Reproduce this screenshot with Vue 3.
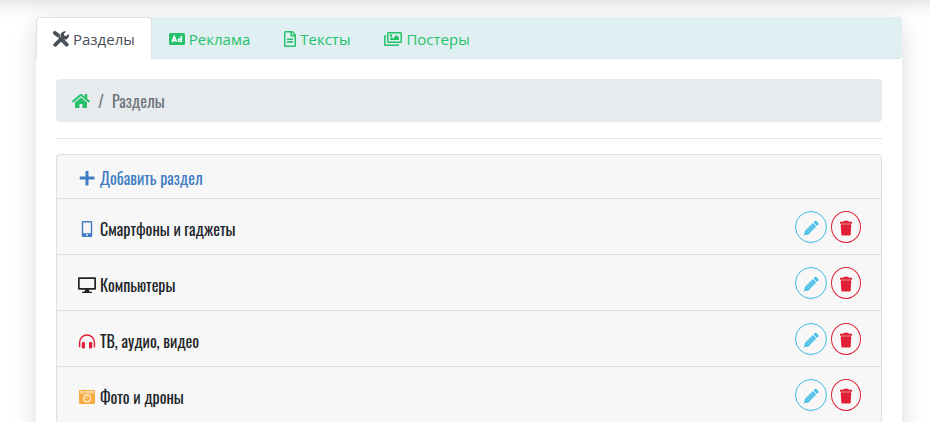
<script setup>
const tabs = [
  { id: 'tools', label: 'Разделы', active: true },
  { id: 'ad', label: 'Реклама' },
  { id: 'file', label: 'Тексты' },
  { id: 'images', label: 'Постеры' },
]

const sections = [
  { id: 'phone', label: 'Смартфоны и гаджеты' },
  { id: 'monitor', label: 'Компьютеры' },
  { id: 'headphones', label: 'ТВ, аудио, видео' },
  { id: 'camera', label: 'Фото и дроны' },
]
</script>

<template>
  <div class="page">
    <main class="panel">
      <nav class="tabs">
        <a v-for="tab in tabs" :key="tab.id" href="#" class="tab" :class="{ active: tab.active }">
          <svg v-if="tab.id === 'tools'" class="icon w16" viewBox="0 0 16 16" aria-hidden="true">
            <path d="M1.900 1.900 5 4.300M2.200 13.800 9 7.200M9.400 9.400l4.300 4.300" fill="none" stroke="currentColor" stroke-width="3.800" stroke-linecap="round" />
            <path d="M4.500 4.500l5.500 5.500" fill="none" stroke="currentColor" stroke-width="1.600" />
            <path d="M13.300.4 10.900 2.800l.4 1.900 1.900.4L15.600 2.700q1.100 3.100-1.200 5-1.900 1.500-4.200.6L7.700 5.800Q6.900 3.600 8.400 1.700q2-2.200 4.900-1.300z" />
          </svg>
          <svg v-else-if="tab.id === 'ad'" class="icon w16" viewBox="0 0 16 16" aria-hidden="true">
            <rect x="0" y="2" width="16" height="12" rx="1.5" />
            <path d="M3 10.900 5.200 5.400 7.400 10.900M3.900 9.400h2.700M12.400 4.900v6" fill="none" stroke="#fff" stroke-width="1.500" />
            <circle cx="10.800" cy="9.100" r="1.500" fill="none" stroke="#fff" stroke-width="1.400" />
          </svg>
          <svg v-else-if="tab.id === 'file'" class="icon w12" viewBox="0 0 384 512" aria-hidden="true">
            <path d="M288 248v28c0 6.600-5.400 12-12 12H108c-6.600 0-12-5.400-12-12v-28c0-6.600 5.400-12 12-12h168c6.600 0 12 5.400 12 12zm-12 72H108c-6.600 0-12 5.400-12 12v28c0 6.600 5.400 12 12 12h168c6.600 0 12-5.400 12-12v-28c0-6.600-5.400-12-12-12zm108-188.100V464c0 26.500-21.500 48-48 48H48c-26.500 0-48-21.500-48-48V48C0 21.500 21.500 0 48 0h204.100C264.800 0 277 5.100 286 14.100L369.900 98c9 8.900 14.100 21.200 14.100 33.900zm-128-80V128h76.100L256 51.900zM336 464V176H232c-13.300 0-24-10.700-24-24V48H48v416h288z" />
          </svg>
          <svg v-else class="icon w18" viewBox="0 0 576 512" aria-hidden="true">
            <path d="M480 416v16c0 26.500-21.500 48-48 48H48c-26.500 0-48-21.500-48-48V176c0-26.500 21.500-48 48-48h16v48H54a6 6 0 0 0-6 6v244a6 6 0 0 0 6 6h372a6 6 0 0 0 6-6v-10h48zm42-336H150a6 6 0 0 0-6 6v244a6 6 0 0 0 6 6h372a6 6 0 0 0 6-6V86a6 6 0 0 0-6-6zm6-48c26.500 0 48 21.500 48 48v256c0 26.500-21.500 48-48 48H144c-26.500 0-48-21.500-48-48V80c0-26.500 21.500-48 48-48h384zM264 144c0 22.100-17.900 40-40 40s-40-17.900-40-40 17.900-40 40-40 40 17.900 40 40zm-72 96l39.500-39.500c4.700-4.700 12.300-4.700 17 0L288 240l103.500-103.500c4.700-4.700 12.300-4.700 17 0L480 208v80H192v-48z" />
          </svg>
          <span>{{ tab.label }}</span>
        </a>
      </nav>

      <div class="content">
        <nav class="breadcrumb">
          <a href="#" class="home" aria-label="Главная">
            <svg class="icon w18" viewBox="0 0 576 512" aria-hidden="true">
              <path d="M280.370 148.260L96 300.110V464a16 16 0 0 0 16 16l112.060-.290a16 16 0 0 0 15.920-16V368a16 16 0 0 1 16-16h64a16 16 0 0 1 16 16v95.640a16 16 0 0 0 16 16.050L464 480a16 16 0 0 0 16-16V300L295.670 148.260a12.190 12.190 0 0 0-15.300 0zM571.600 251.470L488 182.560V44.050a12 12 0 0 0-12-12h-56a12 12 0 0 0-12 12v72.610L318.470 43a48 48 0 0 0-61 0L4.340 251.470a12 12 0 0 0-1.600 16.900l25.500 31A12 12 0 0 0 45.150 301l235.220-193.740a12.190 12.190 0 0 1 15.300 0L530.900 301a12 12 0 0 0 16.900-1.600l25.500-31a12 12 0 0 0-1.700-16.930z" />
            </svg>
          </a>
          <span>/</span>
          <span>Разделы</span>
        </nav>
        <hr class="rule" />

        <ul class="list">
          <li class="row add-row">
            <a href="#" class="add">
              <span class="mark">
                <svg class="icon w16" viewBox="0 0 16 16" aria-hidden="true">
                  <path d="M6.500 1.500q0-.5.5-.5h2q.5 0 .5.5v5H15q.5 0 .5.5v2q0 .5-.5.5H9.500V15q0 .5-.5.5H7q-.5 0-.5-.5V9.500H1.200q-.5 0-.5-.5V7q0-.5.5-.5h5.300z" />
                </svg>
              </span>
              <span>Добавить раздел</span>
            </a>
          </li>
          <li v-for="item in sections" :key="item.id" class="row">
            <span class="name">
              <span class="mark" :class="item.id">
                <svg class="icon large" viewBox="0 0 18 18" aria-hidden="true">
                  <path v-if="item.id === 'phone'" fill-rule="evenodd" d="M5 1h8q1.200 0 1.200 1.200v13.600q0 1.200-1.200 1.200H5q-1.200 0-1.200-1.200V2.200Q3.800 1 5 1zM5.200 2.500v10.700h7.600V2.500zM9 14.100a.9.9 0 1 0 0 1.800.9.9 0 1 0 0-1.800z" />
                  <path v-else-if="item.id === 'monitor'" fill-rule="evenodd" d="M1 1.200h16q1 0 1 1v10.600q0 1-1 1h-6l.5 2H14v1.200H4v-1.200h2.500l.5-2H1q-1 0-1-1V2.200q0-1 1-1zM1.700 2.900v9.200h14.600V2.900z" />
                  <template v-else-if="item.id === 'headphones'">
                    <path d="M1.600 15.200v-4.700a7.400 7.400 0 0 1 14.800 0v4.700" fill="none" stroke="currentColor" stroke-width="1.500" />
                    <rect x="3.800" y="10" width="3.200" height="6.500" rx="1" />
                    <rect x="11" y="10" width="3.200" height="6.500" rx="1" />
                  </template>
                  <template v-else>
                    <rect x="1" y="2" width="16" height="14" rx="1" />
                    <path d="M2 3.700h4M7 3.700h9M1.600 5h14.800" fill="none" stroke="#fbe3c0" stroke-width="1" />
                    <circle cx="9" cy="10.500" r="3.400" fill="none" stroke="#fff2dc" stroke-width="1.200" />
                    <path d="M7.700 11a1.400 1.400 0 0 1 2-1.600" fill="none" stroke="#fff2dc" />
                  </template>
                </svg>
              </span>
              <span>{{ item.label }}</span>
            </span>
            <span class="actions">
              <button type="button" class="round edit" aria-label="Изменить">
                <svg class="icon w16" viewBox="0 0 16 16" aria-hidden="true">
                  <path d="M1 15.200 1.800 11l8-8 3.500 3.500-8 8zM10.500 2.300l1.200-1.100q.8-.7 1.600 0l1.900 1.900q.7.800 0 1.600L14 5.800z" />
                  <path d="m3.300 11.200 6.700-6.600M4.800 12.600l6.600-6.600M1.900 12.900l1.300 1.300" fill="none" stroke="#d5f1fa" stroke-width=".5" />
                </svg>
              </button>
              <button type="button" class="round delete" aria-label="Удалить">
                <svg class="icon w16" viewBox="0 0 16 16" aria-hidden="true">
                  <path d="M5.800.8h4.400l.5.900H14v2H2v-2h3.300zM2.700 4.300h10.600l-.6 10q-.1 1.200-1.200 1.200h-7q-1.100 0-1.200-1.200z" />
                </svg>
              </button>
            </span>
          </li>
        </ul>
      </div>
    </main>
  </div>
</template>

<style>
body {
  background: #fff;
}
</style>

<style scoped>
* {
  box-sizing: border-box;
}

.page {
  height: 100vh;
  padding: 17px 28px 0 36px;
  overflow: hidden;
  background: linear-gradient(#e8e8e8, #f6f6f6 9px, #fff 18px);
  font: 15px/24px "Open Sans", "Noto Sans", sans-serif;
}

.panel {
  min-height: 120vh;
  border-radius: 4px;
  background: #fff;
  box-shadow: 0 8px 24px rgba(0, 0, 0, 0.15);
}

.icon {
  display: block;
  height: 16px;
  flex: none;
  fill: currentColor;
}

.w12 { width: 12px; }
.w16 { width: 16px; }
.w18 { width: 18px; }

.large {
  width: 18px;
  height: 18px;
}

.tabs {
  display: flex;
  height: 42px;
  border-bottom: 1px solid #dee2e6;
  border-radius: 4px;
  background: #dfeff2;
}

.tab {
  display: flex;
  align-items: center;
  gap: 4px;
  height: 42px;
  padding: 0 16px;
  border: 1px solid transparent;
  border-bottom: 0;
  border-radius: 4px 4px 0 0;
  color: #26c26b;
  text-decoration: none;
}

.tab.active {
  border-color: #dee2e6;
  background: #fff;
  color: #495057;
}

.content {
  padding: 20px;
  font-size: 16px;
  font-family: Oswald, "Liberation Sans Narrow", "Liberation Sans", sans-serif;
}

.breadcrumb {
  display: flex;
  align-items: center;
  gap: 8px;
  height: 43px;
  padding: 0 16px;
  border-radius: 4px;
  background: #e7ebee;
  color: #6c757d;
}

.home {
  color: #26c26b;
}

.rule {
  height: 1px;
  margin: 16px 0 15px;
  border: 0;
  background: #e5e5e5;
}

.list {
  margin: 0;
  padding: 0;
  border: 1px solid #dfdfdf;
  border-radius: 4px;
  background: #f7f7f7;
  list-style: none;
}

.row {
  display: flex;
  align-items: center;
  justify-content: space-between;
  height: 56px;
  padding: 0 20px;
  border-bottom: 1px solid #dfdfdf;
  color: #212529;
}

.add-row {
  height: 44px;
}

.add,
.name {
  display: flex;
  align-items: center;
  gap: 4px;
  padding-top: 2px;
}

.name {
  padding-top: 5px;
}

.add {
  color: #3f7cc4;
  text-decoration: none;
}

.mark {
  display: flex;
  justify-content: center;
  width: 19px;
}

.phone { color: #3f7cc4; }
.monitor { color: #212529; }
.headphones { color: #e01f3a; }
.camera { color: #f8ab40; }

.actions {
  display: flex;
  gap: 4px;
}

.round {
  display: flex;
  align-items: center;
  justify-content: center;
  width: 30px;
  height: 32px;
  padding: 2px 0 0;
  border: 1px solid currentColor;
  border-radius: 50%;
  background: transparent;
}

.edit {
  width: 32px;
  color: #43bde2;
}

.delete {
  color: #df1f35;
}
</style>
